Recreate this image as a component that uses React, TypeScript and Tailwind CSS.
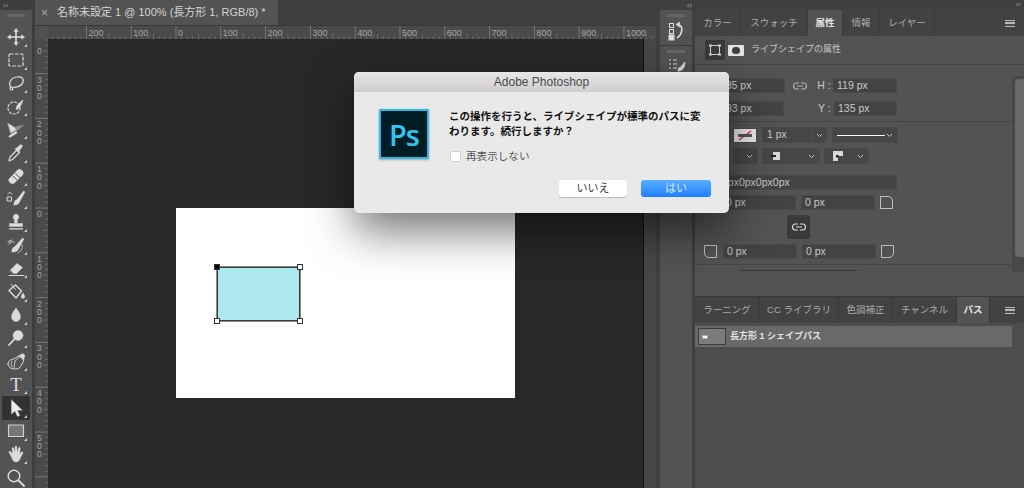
import type { ReactNode } from "react";

const UI_FONT = "font-['Liberation_Sans','Noto_Sans_CJK_JP',sans-serif]";

const TICKS = Array.from({ length: 130 }, (_, i) => i);

function TopRuler() {
  const origin = 141; // zero mark, relative to the ruler
  return (
    <svg width="621" height="13" className="block shrink-0 bg-[#4a4a4a]">
      <rect width="13" height="13" fill="#505050" />
      {TICKS.map((i) => {
        const x = origin + (i - 32) * 5.6;
        const major = (i - 32) % 8 === 0;
        if (x < 13) return null;
        return (
          <line
            key={i}
            x1={x}
            x2={x}
            y1={major ? 0 : (i - 32) % 4 === 0 ? 8 : 10}
            y2="13"
            stroke={major ? "#777777" : "#6a6a6a"}
          />
        );
      })}
      {[200, 100, 0, 100, 200, 300, 400, 500, 600, 700, 800, 900, 1000].map((label, i) => (
        <text key={i} x={origin - 89.6 + i * 44.8 + 2} y="9.5" fontSize="9" fill="#a6a6a6" fontFamily="Liberation Sans">
          {label}
        </text>
      ))}
    </svg>
  );
}

function SideRuler() {
  const origin = 169; // zero mark, relative to the ruler
  const marks = [400, 300, 200, 100, 0, 100, 200, 300, 400, 500, 600];
  return (
    <svg width="13" height="449" className="block shrink-0 bg-[#4a4a4a]">
      {TICKS.map((i) => {
        const y = origin + (i - 32) * 5.6;
        const major = (i - 32) % 8 === 0;
        return (
          <line
            key={i}
            y1={y}
            y2={y}
            x1={major ? 0 : (i - 32) % 4 === 0 ? 8 : 10}
            x2="13"
            stroke={major ? "#777777" : "#6a6a6a"}
          />
        );
      })}
      {marks.map((label, i) =>
        String(label)
          .split("")
          .map((digit, d) => {
            const y = origin + (i - 4) * 44.8 + 9 + d * 8.2;
            if (y < 8 || y > 446) return null;
            return (
              <text key={`${i}-${d}`} x="2" y={y} fontSize="8.5" fill="#a6a6a6" fontFamily="Liberation Sans">
                {digit}
              </text>
            );
          })
      )}
    </svg>
  );
}

function Glyph({ children }: { children: ReactNode }) {
  return (
    <svg
      width="20"
      height="20"
      viewBox="0 0 20 20"
      fill="#dcdcdc"
      stroke="#dcdcdc"
      strokeWidth="1.2"
      strokeLinecap="round"
      strokeLinejoin="round"
    >
      {children}
    </svg>
  );
}

const TOOLS: ReactNode[] = [
  <Glyph>
    <path d="M10 3v14M3 10h14" fill="none" strokeWidth="1.6" />
    <path d="M10 1.5 7.8 4.5h4.4zM10 18.5l-2.2-3h4.4zM1.5 10l3-2.2v4.4zM18.5 10l-3-2.2v4.4z" strokeWidth=".4" />
  </Glyph>,
  <Glyph>
    <rect x="3" y="4" width="14" height="12" rx="1" fill="none" strokeDasharray="3 2.2" />
  </Glyph>,
  <Glyph>
    <path d="M5 14c-3-3-1-9 6-10 5-1 7 2 6 5-1 4-7 6-11 5" fill="none" />
    <path d="M5 14c-2 1-1 3 1 3 1 0 1-1 .5-1.500" fill="none" />
  </Glyph>,
  <Glyph>
    <circle cx="8" cy="11" r="6" fill="none" strokeDasharray="2 2" />
    <path d="M10 12c0-3 3-6 7-9-1 4-3 7-5.500 9.500z" strokeWidth=".6" />
  </Glyph>,
  <Glyph>
    <path d="M2 3.500 11 9 5 13z" strokeWidth=".5" fill="#dcdcdc" />
    <path d="M9 7l9-2-7 6z" strokeWidth=".4" fill="#8d8d8d" stroke="#8d8d8d" />
    <path d="M3 16l7-5 1 2-7 4.500z" strokeWidth=".5" />
  </Glyph>,
  <Glyph>
    <path d="M3 18l1-4 7-7 2.500 2.500-7 7z" fill="none" />
    <path d="M10 5.500 14 2c1.500-1 3 .500 2 2l-3 4 1 1-1 1-4-4z" strokeWidth=".5" />
  </Glyph>,
  <Glyph>
    <path d="M3.500 12.500 11.500 4c1-1 3-1 4 0l1 1c1 1 1 3 0 4l-8 8c-1 1-3 1-4 0l-1-1c-1-1-1-3 0-3.500z" strokeWidth=".5" />
    <path d="M7 10l4 4M9.500 7.500l4 4" stroke="#535353" strokeWidth="1" />
  </Glyph>,
  <Glyph>
    <rect x="1.500" y="8" width="4" height="4" fill="none" strokeWidth="1" />
    <path d="M2 5c1-2 3-2 4 0" fill="none" strokeWidth="1" />
    <path d="M8 16c-.5-3 1-5 3-5.500L17.500 2 19 3l-5 9c-1 3-3 4.500-6 4z" strokeWidth=".4" />
  </Glyph>,
  <Glyph>
    <circle cx="10" cy="5" r="2.800" strokeWidth=".4" />
    <path d="M8.700 7h2.600v4H8.700zM3.500 11.500h13v3h-13z" strokeWidth=".4" />
    <path d="M3.500 16.800h13" strokeWidth="1.200" />
  </Glyph>,
  <Glyph>
    <path d="M2 6 5.500 4M3 8c1-2 3-3 5-2" fill="none" strokeWidth="1" />
    <path d="M6 16c-.5-3 1-5 3-5.500L16.500 2 18 3l-5 9c-1 3-3 4.500-7 4z" strokeWidth=".4" />
    <path d="M16 9c1 3-1 6-4 8" fill="none" strokeWidth="1" strokeDasharray="1.500 1.500" />
  </Glyph>,
  <Glyph>
    <path d="M4 11.500 11 4.500l5.500 4-6 6H7z" fill="#dcdcdc" strokeWidth=".5" />
    <path d="M4 11.500 7 14.500" stroke="#535353" strokeWidth="1" />
    <path d="M3 16.500h15" strokeWidth="1" />
  </Glyph>,
  <Glyph>
    <path d="M3 8.500 9.500 3l6 6-5.500 7z" fill="none" strokeWidth="1.400" />
    <path d="M5 2.500c1.500 0 2 2.500 4.500 5" fill="none" strokeWidth="1" />
    <path d="M17 11c1 1.500 1.800 2.500 1.800 3.700a1.800 1.800 0 0 1-3.600 0c0-1.200.8-2.200 1.800-3.700z" strokeWidth=".3" />
  </Glyph>,
  <Glyph>
    <path d="M10 3c2 3 4.500 5.500 4.500 9a4.500 4.500 0 0 1-9 0c0-3.500 2.500-6 4.500-9z" strokeWidth=".4" />
  </Glyph>,
  <Glyph>
    <circle cx="12" cy="7.500" r="5" strokeWidth=".4" />
    <path d="M8.500 11 3 17" fill="none" strokeWidth="1.800" />
  </Glyph>,
  <Glyph>
    <path d="M2 12c0-3 3-5 6-5l5-3 5 .5-.5 5-3 5c-.5 2-4 2.500-6 2.500-3.500 0-6.500-2-6.500-5z" fill="none" strokeWidth="1" />
    <path d="M9 9 8 16M9 9l6-5M6 9c-1 2-1 4 0 6" fill="none" strokeWidth=".8" />
    <path d="M13 3.500l4-2 2 2-2 4z" strokeWidth=".4" />
  </Glyph>,
  <span className="font-['Liberation_Serif',serif] text-[19px] leading-none text-[#dcdcdc]">T</span>,
  <Glyph>
    <path d="M5.500 2v14l3.500-3 2.500 5.500 2.200-1-2.500-5.300H16z" strokeWidth=".4" fill="#ececec" />
  </Glyph>,
  <Glyph>
    <rect x="2.500" y="4" width="15" height="11.500" fill="#777777" stroke="#d4d4d4" strokeWidth="1.100" strokeLinecap="butt" />
  </Glyph>,
  <Glyph>
    <path
      d="M5 12 3 8.500c-.5-1.200 1-1.800 1.800-.8L6.500 10 6 4.500c0-1.300 1.700-1.300 1.900 0L8.800 9l.2-6c0-1.300 1.800-1.300 1.900 0l.4 6 1.200-5c.3-1.200 1.900-.9 1.800.3L13.800 10l1.400-1.800c.8-1 2.200-.2 1.700.9l-2.400 5C13.500 16.800 12 18 9.800 18 7.500 18 6.200 15.500 5 12z"
      strokeWidth=".3"
    />
  </Glyph>,
  <Glyph>
    <circle cx="8" cy="8" r="5.800" fill="none" strokeWidth="1.400" />
    <path d="M12.500 12.500 18 18" fill="none" strokeWidth="2" />
  </Glyph>,
];

function Toolbar() {
  return (
    <div className="flex h-[488px] w-[32px] shrink-0 flex-col overflow-hidden bg-[#535353]">
      <div className="h-[10px] shrink-0 bg-[#3d3d3d] pl-[3px] text-[8px] leading-[9px] text-[#9a9a9a]">››</div>
      <div className="mx-[7px] mt-[4px] h-[3px] shrink-0 bg-[#666666]" />
      <div className="mt-[8.4px] flex flex-col">
        {TOOLS.map((tool, i) => (
          <div
            key={i}
            className={`relative mx-[2px] flex h-[23.2px] shrink-0 items-center justify-center ${
              i === 16 ? "rounded-[2px] bg-[#333333]" : ""
            }`}
          >
            {tool}
            {i !== 19 && (
              <span className="absolute bottom-[2px] right-[3px] h-0 w-0 border-b-[3px] border-l-[3px] border-b-[#cfcfcf] border-l-transparent" />
            )}
          </div>
        ))}
      </div>
    </div>
  );
}

function ShapeHandle({ className }: { className: string }) {
  return <span className={`absolute h-[6px] w-[6px] border border-[#333333] ${className}`} />;
}

function Canvas() {
  return (
    <div className="h-full flex-1 bg-[#282828] pl-[128px] pt-[169px]">
      <div className="relative h-[190px] w-[339px] bg-white">
        <div className="absolute left-[41px] top-[59px] h-[54px] w-[83px] border border-[#3a3a3a] bg-[#aee9f0] outline outline-1 outline-[#8a8a8a]">
          <ShapeHandle className="left-[-4px] top-[-4px] bg-black" />
          <ShapeHandle className="right-[-4px] top-[-4px] bg-white" />
          <ShapeHandle className="bottom-[-4px] left-[-4px] bg-white" />
          <ShapeHandle className="bottom-[-4px] right-[-4px] bg-white" />
        </div>
      </div>
    </div>
  );
}

function DocumentArea() {
  return (
    <div className="flex w-[621px] shrink-0 flex-col bg-[#3f3f3f]">
      <div className="flex h-[26px] shrink-0 border-b border-[#383838]">
        <div className={`flex w-[243px] items-center bg-[#535353] pl-[6px] text-[11px] text-[#d4d4d4] ${UI_FONT}`}>
          <span className="w-[16px] text-[12px] text-[#aaaaaa]">×</span>
          <span className="whitespace-nowrap">名称未設定 1 @ 100% (長方形 1, RGB/8) *</span>
        </div>
      </div>
      <TopRuler />
      <div className="flex h-[449px]">
        <SideRuler />
        <Canvas />
        <div className="h-full w-[13px] border-l border-[#111111] bg-[#474747]" />
      </div>
    </div>
  );
}

function Dock() {
  return (
    <div className="flex w-[39px] shrink-0 flex-col bg-[#404040] pl-[4px] pr-[3px]">
      <div className="h-[10px] text-right text-[8px] leading-[9px] text-[#9a9a9a]">‹‹</div>
      <div className="flex h-[36px] flex-col items-center border-b border-[#3b3b3b] bg-[#535353] pt-[4px]">
        <div className="h-[3px] w-[18px] bg-[#666666]" />
        <svg width="20" height="20" viewBox="0 0 20 20" className="mt-[4px]" fill="none" stroke="#dcdcdc">
          <rect x="3.500" y="2.500" width="4" height="4" />
          <rect x="3.500" y="8.500" width="4" height="4" />
          <rect x="3" y="14" width="5" height="5" fill="#dcdcdc" />
          <path d="M11 3.500l2-1.500v3zM13 4c4 1 4 9-2 13" strokeWidth="1.600" />
        </svg>
      </div>
      <div className="flex flex-1 flex-col items-center bg-[#535353] pt-[4px]">
        <div className="h-[3px] w-[18px] bg-[#666666]" />
        <svg width="20" height="14" viewBox="0 0 20 14" className="mt-[5px]" fill="none" stroke="#dcdcdc">
          <path d="M3 2h2M7 2h4M3 6h2M7 6h4M3 10h2M7 10h4" />
          <path d="M12 13c0-3 2-4 3-4l4-5-1 5c-1 2-3 4-6 4z" fill="#dcdcdc" />
        </svg>
      </div>
    </div>
  );
}

function Field({ className, children }: { className: string; children: ReactNode }) {
  return (
    <div
      className={`flex h-[15px] shrink-0 items-center border border-[#4a4a4a] bg-[#434343] pl-[3px] text-[10.5px] text-[#c9c9c9] ${className}`}
    >
      {children}
    </div>
  );
}

function Chevron() {
  return (
    <svg width="7" height="5" viewBox="0 0 7 5" className="shrink-0" fill="none" stroke="#c4c4c4">
      <path d="M1 1l2.500 2.500L6 1" />
    </svg>
  );
}

function Select({ className, children }: { className: string; children?: ReactNode }) {
  return (
    <div
      className={`flex h-[16px] shrink-0 items-center justify-between rounded-[2px] border border-[#4a4a4a] bg-[#464646] px-[4px] text-[10.5px] text-[#c9c9c9] ${className}`}
    >
      <span className="flex items-center">{children}</span>
      <Chevron />
    </div>
  );
}

function Corner({ path }: { path: string }) {
  return (
    <svg width="13" height="13" viewBox="0 0 13 13" className="shrink-0" fill="none" stroke="#c0c0c0">
      <path d={path} />
    </svg>
  );
}

const CORNER_TOP_RIGHT = "M.5.500H8A4.500 4.500 0 0 1 12.500 5v7.500H.5z";
const CORNER_BOTTOM_RIGHT = "M.5.500h12V8A4.500 4.500 0 0 1 8 12.500H.5z";
const CORNER_BOTTOM_LEFT = "M.5.500h12v12H5A4.500 4.500 0 0 1 .5 8z";

function LinkIcon({ color }: { color: string }) {
  return (
    <svg width="14" height="10" viewBox="0 0 14 10" fill="none" stroke={color} strokeWidth="1.200">
      <path d="M6 2H3.500a3 3 0 0 0 0 6H6M8 2h2.500a3 3 0 0 1 0 6H8M4 5h6" />
    </svg>
  );
}

function MenuIcon() {
  return <div className="h-[7px] w-[10px] border-y border-[#b8b8b8] bg-[linear-gradient(#4a4a4a_0,#4a4a4a_1px,#b8b8b8_1px,#b8b8b8_3px,#4a4a4a_3px)]" />;
}

function Tabs({ items, active, widths }: { items: string[]; active: number; widths: string[] }) {
  return (
    <div className="flex h-[26px] shrink-0 items-stretch bg-[#424242] pr-[3px]">
      {items.map((item, i) => (
        <div
          key={item}
          className={`flex items-center justify-center whitespace-nowrap border-r border-[#3a3a3a] text-[9.500px] ${widths[i]} ${
            i === active ? "bg-[#535353] font-bold text-[#e4e4e4]" : "text-[#ababab]"
          }`}
        >
          {item}
        </div>
      ))}
      <div className="ml-auto flex w-[22px] items-center justify-center">
        <MenuIcon />
      </div>
    </div>
  );
}

function PropertiesPanel() {
  return (
    <div className="relative h-[286px] shrink-0 bg-[#424242]">
      <Tabs
        items={["カラー", "スウォッチ", "属性", "情報", "レイヤー"]}
        active={2}
        widths={["w-[46px]", "w-[67px]", "w-[35px]", "w-[37px]", "w-[55px]"]}
      />
      <div className="h-[260px] bg-[#535353]">
        <div className="flex h-[29px] items-center border-b border-[#464646] pl-[10px]">
          <div className="flex h-[20px] w-[20px] items-center justify-center rounded-[2px] bg-[#3a3a3a]">
            <svg width="14" height="14" viewBox="0 0 14 14" fill="none" stroke="#cfcfcf">
              <rect x="2.500" y="2.500" width="9" height="9" />
              <path d="M1 2.500h3M10 2.500h3M1 11.500h3M10 11.500h3" strokeWidth="2" />
            </svg>
          </div>
          <div className="ml-[3px] flex h-[11px] w-[16px] items-center justify-center rounded-[1px] bg-[#e2e2e2]">
            <span className="h-[7px] w-[8px] rounded-full bg-[#3f3f3f]" />
          </div>
          <span className="ml-[7px] text-[9px] font-medium text-[#b4b4b4]">ライブシェイプの属性</span>
        </div>

        <div className="flex flex-col pl-[10px] pt-[13px]">
          <div className="flex h-[15px] w-[192px] items-center text-[10.500px] text-[#c9c9c9]">
            <span className="w-[17px]">W :</span>
            <Field className="w-[63px]">85 px</Field>
            <span className="ml-[8px] w-[25px]">
              <LinkIcon color="#b0b0b0" />
            </span>
            <span className="w-[16px]">H :</span>
            <Field className="w-[64px]">119 px</Field>
          </div>
          <div className="mt-[8px] flex h-[15px] w-[192px] items-center text-[10.500px] text-[#c9c9c9]">
            <span className="w-[17px]">X :</span>
            <Field className="w-[62px]">93 px</Field>
            <span className="ml-[34px] w-[16px]">Y :</span>
            <Field className="w-[63px]">135 px</Field>
          </div>
        </div>

        <div className="mt-[5px] flex flex-col gap-[5px] border-t border-[#464646] pl-[38px] pt-[5px]">
          <div className="flex h-[16px] items-center gap-[5px]">
            <div className="flex h-[15px] w-[24px] items-center justify-center border border-[#4a4a4a] bg-[#e8e8e8]">
              <svg width="20" height="11" viewBox="0 0 20 11">
                <path d="M4 10 16 1" stroke="#e0262c" strokeWidth="1.300" />
                <rect x="3" y="4" width="14" height="3" fill="#555555" />
              </svg>
            </div>
            <div className="flex h-[16px] w-[65px] shrink-0 items-center rounded-[2px] border border-[#4a4a4a] bg-[#464646] text-[10.5px] text-[#c9c9c9]">
              <span className="flex-1 pl-[4px]">1 px</span>
              <span className="flex h-full w-[14px] items-center justify-center border-l border-[#4f4f4f]">
                <Chevron />
              </span>
            </div>
            <Select className="w-[66px]">
              <span className="h-[1px] w-[48px] bg-white" />
            </Select>
          </div>
          <div className="flex h-[16px] items-center gap-[4px]">
            <Select className="w-[25px]" />
            <Select className="w-[58px]">
              <svg width="10" height="10" viewBox="0 0 10 10" className="ml-[4px]">
                <path d="M2 1h7v8H2z" fill="#d8d8d8" />
                <path d="M0 5h5" stroke="#222222" strokeWidth="2" />
              </svg>
            </Select>
            <Select className="w-[45px]">
              <svg width="10" height="10" viewBox="0 0 10 10" className="ml-[4px]">
                <path d="M0 0h10v5H5v5H0z" fill="#d8d8d8" />
                <rect x="3" y="4" width="2.500" height="2.500" fill="#222222" />
              </svg>
            </Select>
          </div>
        </div>

        <div className="pl-[10px] pt-[11px]">
          <Field className="h-[15px] w-[192px] pl-[16px]">0px0px0px0px</Field>
        </div>

        <div className="mt-[5px] flex items-center gap-[5px] pl-[27px]">
          <Field className="w-[74px]">0 px</Field>
          <Field className="w-[74px]">0 px</Field>
          <Corner path={CORNER_TOP_RIGHT} />
        </div>

        <div className="ml-[92px] mt-[5px] flex h-[24px] w-[23px] items-center justify-center rounded-[2px] bg-[#3a3a3a]">
          <LinkIcon color="#d8d8d8" />
        </div>

        <div className="mt-[5px] flex items-center pl-[9px]">
          <Corner path={CORNER_BOTTOM_LEFT} />
          <Field className="ml-[6px] w-[74px]">0 px</Field>
          <Field className="ml-[5px] w-[74px]">0 px</Field>
          <span className="ml-[5px]">
            <Corner path={CORNER_BOTTOM_RIGHT} />
          </span>
        </div>

        <div className="mt-[5px] border-t border-[#464646] pl-[46px] pt-[5px]">
          <div className="h-[1px] w-[116px] bg-[#3a3a3a]" />
        </div>
      </div>

      <div className="absolute bottom-[24px] right-0 top-[66px] w-[12px] bg-[#484848] pl-[3px] pt-[3px]">
        <div className="h-[178px] rounded-l-[4px] bg-[#696969]" />
      </div>
    </div>
  );
}

function PathsPanel() {
  return (
    <div className="flex flex-1 flex-col border-t border-[#3a3a3a] bg-[#4d4d4d]">
      <Tabs
        items={["ラーニング", "CC ライブラリ", "色調補正", "チャンネル", "パス"]}
        active={4}
        widths={["w-[65px]", "w-[79px]", "w-[54px]", "w-[64px]", "w-[33px]"]}
      />
      <div className="mt-[3px] flex h-[21px] w-[317px] items-center bg-[#696969] pl-[3px]">
        <div className="flex h-[17px] w-[28px] items-center border border-[#3c3c3c] bg-[#7c7c7c] pl-[3px]">
          <span className="h-[4px] w-[6px] border border-[#a8a8a8] bg-white" />
        </div>
        <span className="ml-[4px] whitespace-nowrap text-[9px] font-bold text-[#e4e4e4]">長方形 1 シェイプパス</span>
      </div>
    </div>
  );
}

function Panels() {
  return (
    <div className={`flex w-[329px] shrink-0 flex-col bg-[#404040] ${UI_FONT}`}>
      <div className="h-[10px] shrink-0 pr-[3px] text-right text-[8px] leading-[9px] text-[#9a9a9a]">››</div>
      <PropertiesPanel />
      <PathsPanel />
    </div>
  );
}

function ConfirmDialog() {
  return (
    <div
      className={`absolute left-[354px] top-[72px] w-[375px] overflow-hidden rounded-[5px] bg-[#e9e9e9] shadow-[0_18px_45px_rgba(0,0,0,0.55)] ${UI_FONT}`}
    >
      <div className="flex h-[20px] items-center justify-center bg-gradient-to-b from-[#e8e6e8] to-[#d0cdd0] text-[12px] text-[#4a4a4a]">
        Adobe Photoshop
      </div>
      <div className="flex h-[121px] pl-[25px] pt-[17px]">
        <div className="flex h-[50px] w-[50px] shrink-0 items-center justify-center border-2 border-[#2fb8e8] bg-[#001d26] shadow-[0_1px_2px_rgba(0,0,0,0.3)]">
          <span className="font-['Open_Sans',sans-serif] text-[29px] font-semibold leading-none tracking-[-1px] text-[#31c5f0]">Ps</span>
        </div>
        <div className="ml-[20px] w-[262px]">
          <p className="text-[10.500px] font-bold leading-[15px] text-[#111111]">
            この操作を行うと、ライブシェイプが標準のパスに変わります。続行しますか？
          </p>
          <div className="ml-[1px] mt-[10px] flex items-center gap-[5px] text-[10.600px] text-[#555555]">
            <span className="h-[11px] w-[11px] rounded-[2px] border border-[#d2d2d2] bg-white" />
            再表示しない
          </div>
          <div className="ml-[110px] mt-[15px] flex gap-[14px] text-[11px]">
            <button className="h-[17px] w-[68px] rounded-[3px] bg-white text-[#444444] shadow-[0_1px_1px_rgba(0,0,0,0.2)]">
              いいえ
            </button>
            <button className="h-[17px] w-[70px] rounded-[3px] bg-gradient-to-b from-[#5aaeff] to-[#1a7fff] text-[#d8eaff]">
              はい
            </button>
          </div>
        </div>
      </div>
    </div>
  );
}

export default function App() {
  return (
    <div className="relative flex h-[488px] w-[1024px] overflow-hidden bg-[#404040]">
      <Toolbar />
      <div className="w-[3px] shrink-0 bg-[#3e3e3e]" />
      <DocumentArea />
      <Dock />
      <Panels />
      <ConfirmDialog />
    </div>
  );
}
